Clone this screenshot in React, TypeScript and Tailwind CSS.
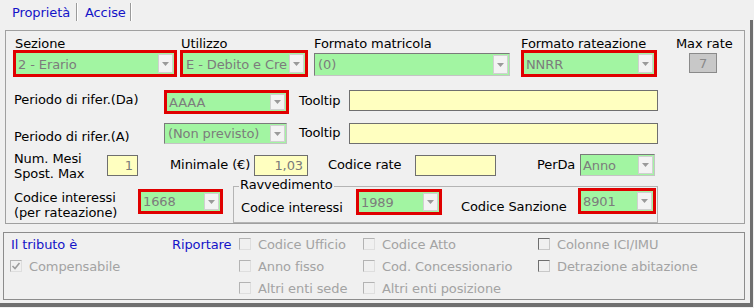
import React from 'react'

function Arrow() {
  return (
    <svg width="7" height="4" viewBox="0 0 7 4">
      <path d="M0 0h7L3.5 4z" fill="#9a9a9a" />
    </svg>
  )
}

function Combo({ className = '', text, red = false, textClass = '' }: { className?: string; text: string; red?: boolean; textClass?: string }) {
  const frame = red
    ? 'border-[3px] border-[#e00000]'
    : 'border border-t-[#7a7a7a] border-l-[#7a7a7a] border-r-[#c4c4c4] border-b-[#c4c4c4]'
  return (
    <div className={`flex shrink-0 bg-[#a2f5a2] ${frame} ${className}`}>
      <div className={`flex min-w-0 flex-1 items-center overflow-hidden whitespace-nowrap pl-[2px] text-[#7c7c7c] ${textClass}`}>{text}</div>
      <div className="my-[1px] mr-[1px] flex w-[15px] shrink-0 items-center justify-center border border-[#d0d0d0] bg-[#f3f3f3]">
        <Arrow />
      </div>
    </div>
  )
}

function Field({ className = '', value = '' }: { className?: string; value?: string }) {
  return (
    <div className={`flex shrink-0 items-center justify-end border border-[#6f6f6f] bg-[#ffffc0] pr-[4px] text-[#7a7a7a] ${className}`}>
      {value}
    </div>
  )
}

function Check({ label, dark = false, checked = false }: { label: string; dark?: boolean; checked?: boolean }) {
  const box = dark
    ? 'border-t-[#6e6e6e] border-l-[#6e6e6e] border-r-[#c8c8c8] border-b-[#c8c8c8]'
    : 'border-t-[#b3b3b3] border-l-[#b3b3b3] border-r-[#dedede] border-b-[#dedede]'
  return (
    <div className="flex h-[22px] items-center whitespace-nowrap text-[#a3a3a3]">
      <span className={`flex h-[12px] w-[12px] shrink-0 items-center justify-center border bg-[#f0f0f0] ${box}`}>
        {checked && (
          <svg width="10" height="10" viewBox="0 0 10 10">
            <path d="M1.5 5 L4 7.5 L8.5 2" stroke="#9c9c9c" strokeWidth="1.6" fill="none" />
          </svg>
        )}
      </span>
      <span className="ml-[7px]">{label}</span>
    </div>
  )
}

export default function App() {
  return (
    <div className="h-[308px] w-[754px] overflow-hidden bg-[#f0f0f0] font-['DejaVu_Sans',sans-serif] text-[13px] leading-[15px] tracking-[-0.1px] text-black">
      {/* tabs */}
      <div className="flex h-[20px]">
        <div className="w-[76px] pl-[12px] pt-[5px] text-[#1414c8]">Proprietà</div>
        <div className="mt-[3px] h-[18px] w-[2px] border-l border-r border-l-[#9a9a9a] border-r-white" />
        <div className="w-[52px] pl-[7px] pt-[5px] text-[#1414c8]">Accise</div>
        <div className="mt-[3px] h-[18px] w-[2px] border-l border-r border-l-[#9a9a9a] border-r-white" />
      </div>

      <div className="h-[287px] w-[753px] border-b-[4px] border-r-[3px] border-[#6f6f6f] pt-[10px]">
        {/* top panel */}
        <div className="ml-[5px] h-[194px] w-[740px] border border-[#a0a0a0] pt-[5px]">
          <div className="flex h-[41px]">
            <div className="ml-[7px] flex w-[164px] flex-col">
              <div className="h-[14px] pl-[2px]">Sezione</div>
              <Combo red className="h-[27px] w-[164px]" text="2 - Erario" textClass="pt-[2px]" />
            </div>
            <div className="ml-[3px] flex w-[128px] flex-col">
              <div className="h-[14px] pl-[1px]">Utilizzo</div>
              <Combo red className="h-[27px] w-[128px]" text="E - Debito e Cre" textClass="pt-[2px] pl-[3px]" />
            </div>
            <div className="ml-[6px] flex w-[196px] flex-col">
              <div className="h-[14px]">Formato matricola</div>
              <Combo className="mt-[3px] h-[23px] w-[196px]" text="(0)" textClass="pl-[3px]" />
            </div>
            <div className="ml-[11px] flex w-[136px] flex-col">
              <div className="h-[14px] whitespace-nowrap">Formato rateazione</div>
              <Combo red className="h-[27px] w-[136px]" text="NNRR" textClass="pt-[2px] pl-[1px]" />
            </div>
            <div className="ml-[19px] flex w-[58px] flex-col">
              <div className="h-[14px] whitespace-nowrap">Max rate</div>
              <div className="ml-[13px] mt-[3px] flex h-[20px] w-[28px] items-center justify-center border border-[#8a8a8a] bg-[#c8c8c8] text-[#8a8a8a]">7</div>
            </div>
          </div>

          <div className="mt-[13px] flex h-[24px]">
            <div className="ml-[8px] mt-[2px] w-[150px] whitespace-nowrap">Periodo di rifer.(Da)</div>
            <Combo red className="h-[24px] w-[125px]" text="AAAA" textClass="pl-[1px]" />
            <div className="mt-[3px] w-[60px] pl-[10px]">Tooltip</div>
            <Field className="h-[21px] w-[309px]" />
          </div>

          <div className="mt-[9px] flex h-[21px]">
            <div className="ml-[8px] mt-[6px] w-[150px] whitespace-nowrap">Periodo di rifer.(A)</div>
            <Combo className="h-[21px] w-[123px]" text="(Non previsto)" textClass="pl-[3px]" />
            <div className="mt-[2px] w-[62px] pl-[12px]">Tooltip</div>
            <Field className="h-[21px] w-[309px]" />
          </div>

          <div className="mt-[6px] flex h-[36px]">
            <div className="ml-[8px] mt-[1px] w-[93px] whitespace-nowrap">
              Num. Mesi
              <br />
              Spost. Max
            </div>
            <Field className="mt-[5px] h-[21px] w-[31px]" value="1" />
            <div className="mt-[7px] w-[116px] whitespace-nowrap pl-[32px]">Minimale (€)</div>
            <Field className="mt-[5px] h-[21px] w-[54px]" value="1,03" />
            <div className="mt-[7px] w-[107px] whitespace-nowrap pl-[20px]">Codice rate</div>
            <Field className="mt-[5px] h-[21px] w-[81px]" />
            <div className="mt-[7px] w-[84px] pl-[41px]">PerDa</div>
            <Combo className="mt-[4px] h-[22px] w-[75px]" text="Anno" />
          </div>

          <div className="flex h-[37px]">
            <div className="ml-[8px] mt-[4px] w-[124px] whitespace-nowrap">
              Codice interessi
              <br />
              (per rateazione)
            </div>
            <Combo red className="mt-[3px] h-[25px] w-[85px]" text="1668" textClass="pl-[2px]" />
            <div className="relative ml-[10px] flex h-[37px] w-[425px] border border-[#b4b4b4]">
              <div className="absolute -top-[10px] left-[5px] bg-[#f0f0f0] px-[1px]">Ravvedimento</div>
              <div className="mt-[13px] w-[122px] whitespace-nowrap pl-[7px]">Codice interessi</div>
              <Combo red className="mt-[2px] h-[26px] w-[86px]" text="1989" />
              <div className="mt-[12px] w-[136px] whitespace-nowrap pl-[19px]">Codice Sanzione</div>
              <Combo red className="mt-[1px] h-[26px] w-[78px]" text="8901" />
            </div>
          </div>
        </div>

        {/* bottom panel */}
        <div className="ml-[3px] mt-[8px] h-[68px] w-[742px] border border-[#8c8c8c]">
          <div className="grid grid-cols-[161px_67px_124px_175px_1fr] grid-rows-[22px_22px_22px] pl-[7px]">
            <div className="flex h-[22px] items-center text-[#1414c8]">Il tributo è</div>
            <div className="flex h-[22px] items-center text-[#1414c8]">Riportare</div>
            <Check label="Codice Ufficio" />
            <Check label="Codice Atto" />
            <Check label="Colonne ICI/IMU" dark />

            <div className="-ml-[1px]">
              <Check label="Compensabile" checked />
            </div>
            <div />
            <Check label="Anno fisso" />
            <Check label="Cod. Concessionario" />
            <Check label="Detrazione abitazione" dark />

            <div />
            <div />
            <Check label="Altri enti sede" />
            <Check label="Altri enti posizione" />
            <div />
          </div>
        </div>
      </div>
    </div>
  )
}
